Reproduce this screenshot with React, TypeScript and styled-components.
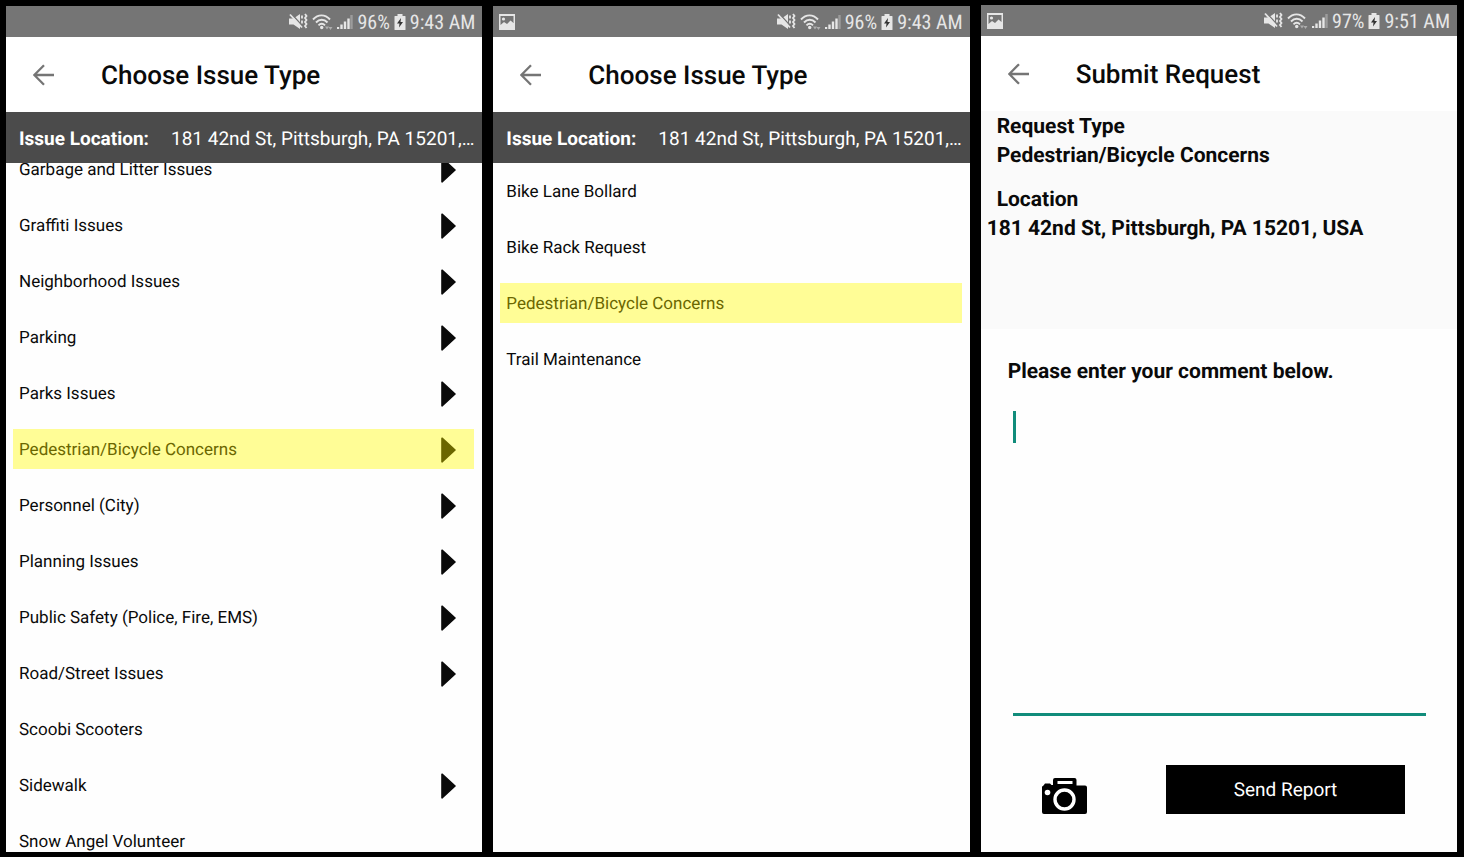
import React from "react";
import styled, { createGlobalStyle, css } from "styled-components";

const GlobalStyle = createGlobalStyle`
  *, *::before, *::after { box-sizing: border-box; }
  body { margin: 0; background: #000; }
  button, textarea { font: inherit; }
`;

const Page = styled.main`
  display: grid;
  grid-template-columns: repeat(3, minmax(0, 1fr));
  column-gap: 11px;
  height: 100vh;
  padding: 6px 7px 5px 6px;
  background: #000;
  color: #0a0a0a;
  font-family: Roboto, "Liberation Sans", sans-serif;
  text-rendering: geometricPrecision;
`;

const Phone = styled.section<{ $raised?: boolean }>`
  display: flex;
  flex-direction: column;
  min-height: 0;
  overflow: hidden;
  background: #fefefe;
  margin-top: ${(p) => (p.$raised ? "-1px" : "0")};
`;

const StatusBar = styled.div`
  flex: none;
  display: flex;
  align-items: center;
  justify-content: space-between;
  height: 31px;
  padding: 0 7px 0 6px;
  background: #757575;
  color: #e6e6e6;
`;

const StatusGroup = styled.div`
  display: flex;
  align-items: center;
  gap: 4px;
  font-family: "Roboto Condensed", Roboto, sans-serif;
  font-size: 20px;
  line-height: 24px;
  white-space: nowrap;
`;

const Header = styled.header`
  flex: none;
  display: flex;
  align-items: center;
  gap: 46px;
  height: 75px;
  padding-left: 27px;
  background: #fff;
`;

const BackButton = styled.button`
  display: flex;
  padding: 0;
  border: 0;
  background: none;
  color: #757575;
`;

const Title = styled.h1`
  margin: 0;
  padding-top: 2px;
  font-size: 26px;
  line-height: 32px;
  font-weight: 500;
`;

const LocationBar = styled.div`
  flex: none;
  display: flex;
  align-items: center;
  gap: 22px;
  height: 51px;
  padding: 2px 4px 0 13px;
  background: #4b4b4b;
  color: #fff;
  font-size: 19px;
  line-height: 24px;
`;

const LocationLabel = styled.strong`
  flex: none;
  font-weight: 700;
`;

const LocationValue = styled.span`
  overflow: hidden;
  text-overflow: ellipsis;
  white-space: nowrap;
`;

const ListViewport = styled.div`
  flex: 1;
  min-height: 0;
  overflow: hidden;
`;

const List = styled.ul<{ $scrolled?: boolean }>`
  display: flex;
  flex-direction: column;
  gap: 16px;
  margin: ${(p) => (p.$scrolled ? "-22px" : "0")} 0 0;
  padding: 8px 8px 8px 7px;
  list-style: none;
`;

const IssueButton = styled.button<{ $highlighted?: boolean }>`
  display: flex;
  align-items: center;
  justify-content: space-between;
  width: 100%;
  height: 40px;
  padding: 1px 18px 0 6px;
  border: 0;
  background: none;
  color: #0a0a0a;
  font-size: 17px;
  line-height: 24px;
  text-align: left;
  text-rendering: inherit;
  ${(p) =>
    p.$highlighted &&
    css`
      background: #fffd96;
      color: #6b6700;
    `}
`;

const Summary = styled.dl`
  flex: none;
  display: flex;
  flex-direction: column;
  height: 218px;
  margin: 0;
  padding-top: 2px;
  background: #fafafa;
  font-size: 21px;
  line-height: 29px;
  font-weight: 700;
`;

const SummaryTerm = styled.dt`
  padding-left: 16px;
`;

const SummaryValue = styled.dd<{ $flush?: boolean }>`
  margin: 0 0 15px;
  padding-left: ${(p) => (p.$flush ? "6px" : "16px")};
`;

const CommentForm = styled.form`
  flex: 1;
  display: flex;
  flex-direction: column;
  min-height: 0;
  padding: 29px 31px 38px 32px;
`;

const CommentLabel = styled.label`
  margin: 0 0 24px -5px;
  font-size: 21px;
  line-height: 29px;
  font-weight: 700;
`;

const CommentField = styled.div`
  position: relative;
  flex: 1;
  display: flex;
  min-height: 0;
  border-bottom: 3px solid #118c7b;
`;

const CommentBox = styled.textarea`
  flex: 1;
  padding: 0 4px;
  border: 0;
  outline: none;
  resize: none;
  background: none;
  font-size: 21px;
  line-height: 32px;
  caret-color: transparent;
`;

const Caret = styled.span`
  position: absolute;
  top: 0;
  left: 0;
  width: 3px;
  height: 32px;
  background: #118c7b;
`;

const Actions = styled.div`
  flex: none;
  display: flex;
  align-items: flex-end;
  justify-content: space-between;
  padding: 49px 21px 0 29px;
`;

const CameraButton = styled.button`
  display: flex;
  padding: 0;
  border: 0;
  background: none;
  color: #000;
`;

const SendButton = styled.button`
  flex: 0 1 239px;
  height: 49px;
  border: 0;
  background: #000;
  color: #fff;
  font-size: 19px;
  line-height: 24px;
  text-rendering: inherit;
`;

const MutedIcon = () => (
  <svg width="19" height="18" viewBox="0 0 19 18" aria-hidden="true">
    <path d="M0 5.500h4.500L11 1v15l-6.500-4.500H0z" fill="currentColor" />
    <path d="M2.500 1l11 12" stroke="#757575" strokeWidth="1.500" />
    <path d="M1 1.500l12 13" stroke="currentColor" strokeWidth="1.800" />
    <path d="M13 2.500v3M13 7.500v3" stroke="currentColor" strokeWidth="1.800" />
    <path d="M16 1l1.500 2L16 5l1.500 2L16 9l1.500 2L16 13l1.500 2" fill="none" stroke="currentColor" strokeWidth="1.800" />
  </svg>
);

const WifiIcon = () => (
  <svg width="21" height="16" viewBox="0 0 21 16" aria-hidden="true">
    <path d="M1 5.500C6 0 13 0 18 5.500M4 8.500c3.500-3.700 8-3.700 11.500 0M6.500 11.300c2-2 4.500-2 6.500 0" fill="none" stroke="currentColor" strokeWidth="1.900" />
    <circle cx="9.700" cy="13.500" r="1.700" fill="currentColor" />
    <path d="M13 12.500h4l-2 3zM16.500 13h4l-2 3z" fill="currentColor" opacity=".5" />
  </svg>
);

const SignalIcon = () => (
  <svg width="16" height="14" viewBox="0 0 16 14" aria-hidden="true">
    <path d="M1 12v2M4.500 9.500V14M8 6.500V14M11.500 3.500V14" stroke="currentColor" strokeWidth="2.400" />
    <path d="M14.500 0v14" stroke="currentColor" strokeWidth="2.400" opacity=".35" />
  </svg>
);

const BatteryIcon = () => (
  <svg width="12" height="16" viewBox="0 0 12 16" aria-hidden="true">
    <path d="M3.500 0h5v2H11q.5 0 .5.500v13q0 .5-.5.500H1q-.5 0-.5-.5v-13Q.5 2 1 2h2.500z" fill="currentColor" />
    <path d="M7 4L3 9.500h2.500L5 13.500 9 8H6.500z" fill="#333" />
  </svg>
);

const PictureIcon = () => (
  <svg width="16" height="16" viewBox="0 0 16 16" aria-hidden="true">
    <path fillRule="evenodd" d="M0 0h16v16H0zM1.500 2v9l3.500-3 3 2 3.500-3.500 3 2.500V2z" fill="currentColor" />
    <circle cx="4.500" cy="5" r="1.600" fill="currentColor" />
  </svg>
);

const BackArrow = () => (
  <svg width="22" height="22" viewBox="0 0 22 22" aria-hidden="true">
    <path d="M21 11H1.500M11 1.200L1.300 11l9.700 9.800" fill="none" stroke="currentColor" strokeWidth="2.300" />
  </svg>
);

const Triangle = () => (
  <svg width="15" height="26" viewBox="0 0 15 26" aria-hidden="true">
    <path d="M1 1.200L14 13 1 24.800z" fill="currentColor" stroke="currentColor" strokeWidth="1.600" strokeLinejoin="round" />
  </svg>
);

const CameraIcon = () => (
  <svg width="45" height="36" viewBox="0 0 45 36" aria-hidden="true">
    <path d="M0 9q0-1 1.500-1.500L3 5.500h5l1.500 1.500H11V2q0-2 2-2h19.500q2 0 2 2v5.500H43q2 0 2 2V34q0 2-2 2H2q-2 0-2-2z" fill="currentColor" />
    <rect x="15.500" y="3" width="15" height="3" fill="#fff" />
    <circle cx="5.500" cy="14.500" r="2.800" fill="#fff" />
    <circle cx="22.500" cy="21.500" r="9.500" fill="none" stroke="#fff" strokeWidth="3.400" />
  </svg>
);

type StatusProps = { battery: string; time: string; picture?: boolean };

const Status = ({ battery, time, picture }: StatusProps) => (
  <StatusBar>
    <StatusGroup>{picture && <PictureIcon />}</StatusGroup>
    <StatusGroup>
      <MutedIcon />
      <WifiIcon />
      <SignalIcon />
      <span>{battery}</span>
      <BatteryIcon />
      <span>{time}</span>
    </StatusGroup>
  </StatusBar>
);

const ScreenHeader = ({ title }: { title: string }) => (
  <Header>
    <BackButton type="button" aria-label="Back">
      <BackArrow />
    </BackButton>
    <Title>{title}</Title>
  </Header>
);

type Issue = { name: string; nested?: boolean; highlighted?: boolean };

const issueTypes: Issue[] = [
  { name: "Garbage and Litter Issues", nested: true },
  { name: "Graffiti Issues", nested: true },
  { name: "Neighborhood Issues", nested: true },
  { name: "Parking", nested: true },
  { name: "Parks Issues", nested: true },
  { name: "Pedestrian/Bicycle Concerns", nested: true, highlighted: true },
  { name: "Personnel (City)", nested: true },
  { name: "Planning Issues", nested: true },
  { name: "Public Safety (Police, Fire, EMS)", nested: true },
  { name: "Road/Street Issues", nested: true },
  { name: "Scoobi Scooters" },
  { name: "Sidewalk", nested: true },
  { name: "Snow Angel Volunteer" },
];

const concernTypes: Issue[] = [
  { name: "Bike Lane Bollard" },
  { name: "Bike Rack Request" },
  { name: "Pedestrian/Bicycle Concerns", highlighted: true },
  { name: "Trail Maintenance" },
];

type ChooserProps = { issues: Issue[]; scrolled?: boolean; picture?: boolean };

const IssueChooser = ({ issues, scrolled, picture }: ChooserProps) => (
  <Phone>
    <Status battery="96%" time="9:43 AM" picture={picture} />
    <ScreenHeader title="Choose Issue Type" />
    <LocationBar>
      <LocationLabel>Issue Location:</LocationLabel>
      <LocationValue>181 42nd St, Pittsburgh, PA 15201, USA</LocationValue>
    </LocationBar>
    <ListViewport>
      <List $scrolled={scrolled}>
        {issues.map((issue) => (
          <li key={issue.name}>
            <IssueButton type="button" $highlighted={issue.highlighted}>
              {issue.name}
              {issue.nested && <Triangle />}
            </IssueButton>
          </li>
        ))}
      </List>
    </ListViewport>
  </Phone>
);

const SubmitRequest = () => (
  <Phone $raised>
    <Status battery="97%" time="9:51 AM" picture />
    <ScreenHeader title="Submit Request" />
    <Summary>
      <SummaryTerm>Request Type</SummaryTerm>
      <SummaryValue>Pedestrian/Bicycle Concerns</SummaryValue>
      <SummaryTerm>Location</SummaryTerm>
      <SummaryValue $flush>181 42nd St, Pittsburgh, PA 15201, USA</SummaryValue>
    </Summary>
    <CommentForm>
      <CommentLabel htmlFor="comment">Please enter your comment below.</CommentLabel>
      <CommentField>
        <CommentBox id="comment" />
        <Caret />
      </CommentField>
      <Actions>
        <CameraButton type="button" aria-label="Add photo">
          <CameraIcon />
        </CameraButton>
        <SendButton type="button">Send Report</SendButton>
      </Actions>
    </CommentForm>
  </Phone>
);

export default function App() {
  return (
    <>
      <GlobalStyle />
      <Page>
        <IssueChooser issues={issueTypes} scrolled />
        <IssueChooser issues={concernTypes} picture />
        <SubmitRequest />
      </Page>
    </>
  );
}
